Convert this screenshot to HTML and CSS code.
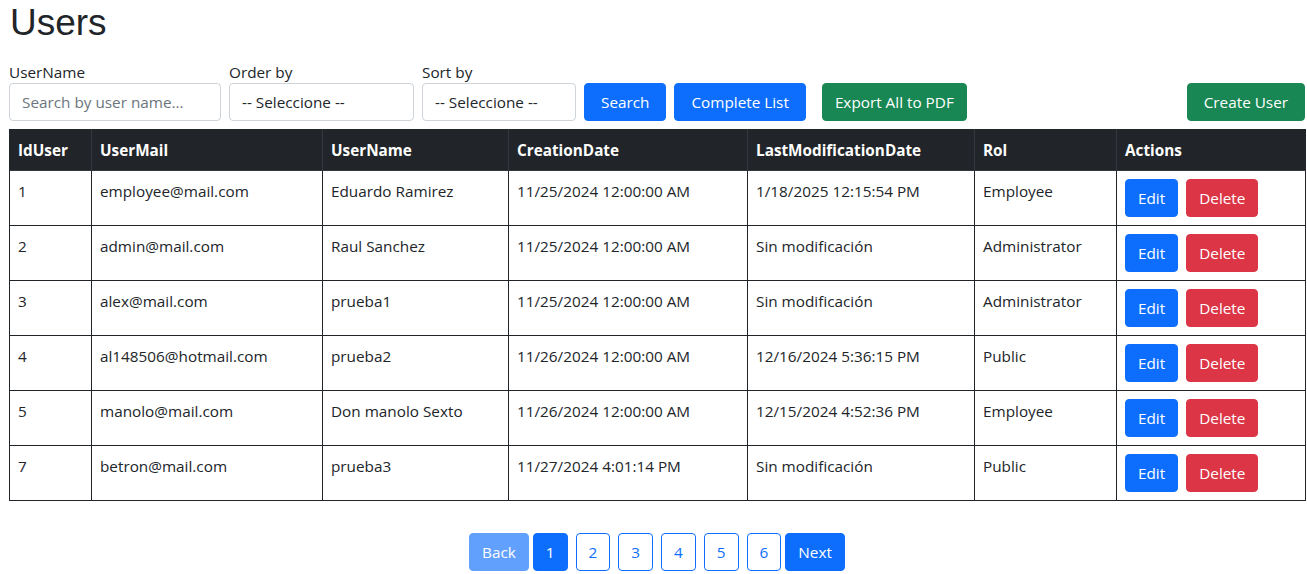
FILE: index.html
```html
<!DOCTYPE html>
<html lang="en">
<head>
<meta charset="utf-8">
<title>Users</title>
<link rel="stylesheet" href="styles.css">
</head>
<body>
<div class="page">
  <h1 class="title">Users</h1>
  <form class="filters">
    <div class="field field-user">
      <label class="field-label">UserName</label>
      <input class="control" type="text" placeholder="Search by user name...">
    </div>
    <div class="field field-order">
      <label class="field-label">Order by</label>
      <select class="control"><option>-- Seleccione --</option></select>
    </div>
    <div class="field field-sort">
      <label class="field-label">Sort by</label>
      <select class="control"><option>-- Seleccione --</option></select>
    </div>
    <button type="button" class="btn btn-primary btn-wide">Search</button>
    <button type="button" class="btn btn-primary btn-wide">Complete List</button>
    <button type="button" class="btn btn-success btn-export">Export All to PDF</button>
    <button type="button" class="btn btn-success btn-wide btn-create">Create User</button>
  </form>

  <table class="users">
    <colgroup>
      <col class="c-id"><col class="c-mail"><col class="c-name"><col class="c-created"><col class="c-modified"><col class="c-rol"><col class="c-actions">
    </colgroup>
    <thead>
      <tr><th>IdUser</th><th>UserMail</th><th>UserName</th><th>CreationDate</th><th>LastModificationDate</th><th>Rol</th><th>Actions</th></tr>
    </thead>
    <tbody>
      <tr><td>1</td><td>employee@mail.com</td><td>Eduardo Ramirez</td><td>11/25/2024 12:00:00 AM</td><td>1/18/2025 12:15:54 PM</td><td>Employee</td><td class="actions"><button class="btn btn-primary">Edit</button><button class="btn btn-danger">Delete</button></td></tr>
      <tr><td>2</td><td>admin@mail.com</td><td>Raul Sanchez</td><td>11/25/2024 12:00:00 AM</td><td>Sin modificación</td><td>Administrator</td><td class="actions"><button class="btn btn-primary">Edit</button><button class="btn btn-danger">Delete</button></td></tr>
      <tr><td>3</td><td>alex@mail.com</td><td>prueba1</td><td>11/25/2024 12:00:00 AM</td><td>Sin modificación</td><td>Administrator</td><td class="actions"><button class="btn btn-primary">Edit</button><button class="btn btn-danger">Delete</button></td></tr>
      <tr><td>4</td><td>al148506@hotmail.com</td><td>prueba2</td><td>11/26/2024 12:00:00 AM</td><td>12/16/2024 5:36:15 PM</td><td>Public</td><td class="actions"><button class="btn btn-primary">Edit</button><button class="btn btn-danger">Delete</button></td></tr>
      <tr><td>5</td><td>manolo@mail.com</td><td>Don manolo Sexto</td><td>11/26/2024 12:00:00 AM</td><td>12/15/2024 4:52:36 PM</td><td>Employee</td><td class="actions"><button class="btn btn-primary">Edit</button><button class="btn btn-danger">Delete</button></td></tr>
      <tr><td>7</td><td>betron@mail.com</td><td>prueba3</td><td>11/27/2024 4:01:14 PM</td><td>Sin modificación</td><td>Public</td><td class="actions"><button class="btn btn-primary">Edit</button><button class="btn btn-danger">Delete</button></td></tr>
    </tbody>
  </table>

  <nav class="pager">
    <button class="btn btn-primary is-disabled">Back</button>
    <button class="btn btn-primary page-num">1</button>
    <button class="btn btn-outline page-num">2</button>
    <button class="btn btn-outline page-num">3</button>
    <button class="btn btn-outline page-num">4</button>
    <button class="btn btn-outline page-num">5</button>
    <button class="btn btn-outline page-num">6</button>
    <button class="btn btn-primary">Next</button>
  </nav>
</div>
</body>
</html>
```

FILE: styles.css
```css
* { box-sizing: border-box; }

html, body {
  margin: 0;
  padding: 0;
  background: #fff;
}

body {
  font-family: "Open Sans", "Noto Sans", sans-serif;
  font-size: 15.3px;
  line-height: 24px;
  color: #212529;
}

.page {
  padding: 0 2px 0 9px;
}

.title {
  margin: 0 0 15px 0;
  font-family: "Liberation Sans", Arial, sans-serif;
  font-size: 37px;
  font-weight: 400;
  line-height: 46px;
  padding-left: 1px;
}

.filters {
  display: flex;
  align-items: flex-end;
  gap: 8px;
  margin: 0;
}

.field {
  display: flex;
  flex-direction: column;
}

.field-label {
  line-height: 22px;
  margin: 0;
}

.control {
  height: 38px;
  font-family: inherit;
  font-size: 15.3px;
  color: #212529;
  background: #fff;
  border: 1px solid #ced4da;
  border-radius: 4px;
  padding: 6px 12px;
  -webkit-appearance: none;
  appearance: none;
}

.control::placeholder { color: #6c757d; }

.field-user .control { width: 212px; }
.field-order .control { width: 185px; }
.field-sort .control { width: 154px; }

.btn {
  display: inline-block;
  height: 38px;
  font-family: inherit;
  font-size: 15.3px;
  line-height: 24px;
  padding: 6px 12px;
  border: 1px solid transparent;
  border-radius: 4px;
  color: #fff;
  cursor: pointer;
}

.btn-wide { padding-left: 16px; padding-right: 16px; }

.btn-primary { background: #0d6efd; border-color: #0d6efd; }
.btn-success { background: #198754; border-color: #198754; }
.btn-danger { background: #dc3545; border-color: #dc3545; }
.btn-outline { background: #fff; border-color: #0d6efd; color: #0d6efd; }
.is-disabled { opacity: 0.65; }

.btn-export { margin-left: 8px; }
.btn-create { margin-left: auto; }

.users {
  width: 1296px;
  margin-top: 8px;
  border-collapse: collapse;
  table-layout: fixed;
  border: 1px solid #212529;
}

.c-id { width: 82px; }
.c-mail { width: 231px; }
.c-name { width: 186px; }
.c-created { width: 239px; }
.c-modified { width: 227px; }
.c-rol { width: 142px; }
.c-actions { width: 189px; }

.users th, .users td {
  text-align: left;
  vertical-align: top;
  padding: 8px;
  border: 1px solid #212529;
}

.users th {
  background: #212529;
  color: #fff;
  font-weight: 700;
  border-color: #32383e;
}

.users thead tr th { border-top-color: #212529; }
.users thead tr th:first-child { border-left-color: #212529; }
.users thead tr th:last-child { border-right-color: #212529; }

.actions .btn + .btn { margin-left: 8px; }

.pager {
  display: flex;
  justify-content: center;
  margin-top: 32px;
}

.page-num { margin: 0 4px; }
```
